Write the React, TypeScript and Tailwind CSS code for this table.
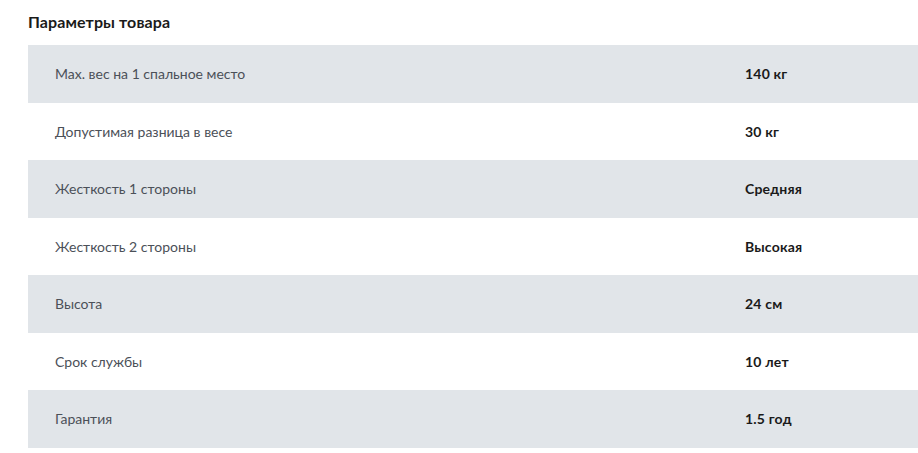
export default function App() {
  const rows: [string, string][] = [
    ["Мах. вес на 1 спальное место", "140 кг"],
    ["Допустимая разница в весе", "30 кг"],
    ["Жесткость 1 стороны", "Средняя"],
    ["Жесткость 2 стороны", "Высокая"],
    ["Высота", "24 см"],
    ["Срок службы", "10 лет"],
    ["Гарантия", "1.5 год"],
  ];
  return (
    <div className="min-h-[453px] bg-white pl-[28px] pt-[12px]" style={{ fontFamily: "Lato, 'Noto Sans', sans-serif" }}>
      <h2 className="text-[16px] font-bold leading-[20px] tracking-[0.1px] text-[#1a1a1a]">Параметры товара</h2>
      <div className="mt-[13px] w-[900px]">
        {rows.map(([k, v], i) => (
          <div key={k} className={`flex h-[57.5px] items-center pl-[27px] ${i % 2 === 0 ? "bg-[#e1e5e9]" : "bg-white"}`}>
            <div className="w-[690px] text-[14px] text-[#4b5058]">{k}</div>
            <div className="text-[14px] font-bold tracking-[0.2px] text-[#1a1a1a]">{v}</div>
          </div>
        ))}
      </div>
    </div>
  );
}
